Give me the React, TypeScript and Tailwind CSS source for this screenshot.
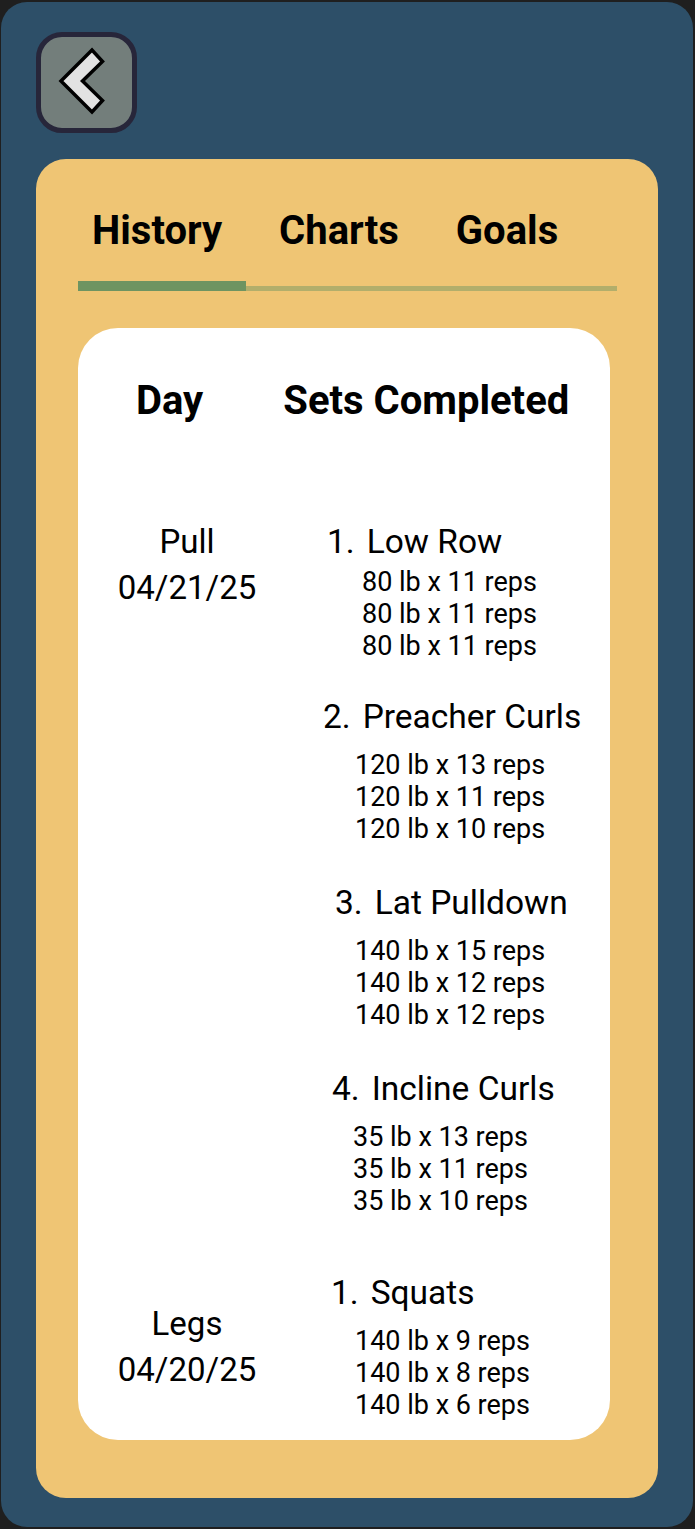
type Exercise = {
  name: string;
  num: number;
  titleClass: string;
  setsClass: string;
  sets: string[];
};

type Workout = {
  day: string;
  date: string;
  rowClass: string;
  exercises: Exercise[];
};

const workouts: Workout[] = [
  {
    day: 'Pull',
    date: '04/21/25',
    rowClass: 'items-start',
    exercises: [
      {
        num: 1,
        name: 'Low Row',
        titleClass: 'pt-[3px] pl-[31px]',
        setsClass: 'mt-[4px] pl-[66px]',
        sets: ['80 lb x 11 reps', '80 lb x 11 reps', '80 lb x 11 reps'],
      },
      {
        num: 2,
        name: 'Preacher Curls',
        titleClass: 'mt-[35px] pl-[27px]',
        setsClass: 'mt-[12px] pl-[59px]',
        sets: ['120 lb x 13 reps', '120 lb x 11 reps', '120 lb x 10 reps'],
      },
      {
        num: 3,
        name: 'Lat Pulldown',
        titleClass: 'mt-[38px] pl-[39px]',
        setsClass: 'mt-[12px] pl-[59px]',
        sets: ['140 lb x 15 reps', '140 lb x 12 reps', '140 lb x 12 reps'],
      },
      {
        num: 4,
        name: 'Incline Curls',
        titleClass: 'mt-[38px] pl-[36px]',
        setsClass: 'mt-[12px] pl-[57px]',
        sets: ['35 lb x 13 reps', '35 lb x 11 reps', '35 lb x 10 reps'],
      },
    ],
  },
  {
    day: 'Legs',
    date: '04/20/25',
    rowClass: 'items-center mt-[56px]',
    exercises: [
      {
        num: 1,
        name: 'Squats',
        titleClass: 'pl-[35px]',
        setsClass: 'mt-[12px] pl-[59px]',
        sets: ['140 lb x 9 reps', '140 lb x 8 reps', '140 lb x 6 reps'],
      },
    ],
  },
];

function BackButton() {
  return (
    <button className="w-[101px] h-[101px] rounded-[26px] border-[5px] border-[#27263a] bg-[#737e7b] flex items-center justify-center">
      <svg width="91" height="91" viewBox="0 0 91 91" className="-translate-x-[2px] -translate-y-[2px]">
        <polygon
          points="22,46 53,15 63.5,26.5 43.5,46 63.5,65.5 53,77"
          fill="#e2e2e2"
          stroke="#000"
          strokeWidth="3.5"
          strokeLinejoin="miter"
        />
      </svg>
    </button>
  );
}

export default function App() {
  const tabs = ['History', 'Charts', 'Goals'];

  return (
    <div className="w-[695px] h-[1529px] bg-[#1f1f1f] pt-[2px] pl-px pr-[2px] pb-[2px] font-[Roboto,sans-serif] text-black">
      <div className="h-full rounded-[26px] bg-[#2d4f68] pt-[30px] pl-[35px] pr-[35px]">
        <BackButton />

        <div className="mt-[26px] h-[1339px] rounded-[30px] bg-[#efc574] pt-[48px]">
          {/* tabs */}
          <div className="flex gap-[57px] pl-[56px]">
            {tabs.map((tab) => (
              <div key={tab} className="text-[40px] leading-[48px] font-bold">
                {tab}
              </div>
            ))}
          </div>
          <div className="mt-[26px] ml-[42px] w-[539px] flex items-end">
            <div className="w-[168px] h-[10px] bg-[#6e9461]" />
            <div className="flex-1 h-[5px] bg-[#b2ae6b]" />
          </div>

          {/* history card */}
          <div className="mt-[37px] ml-[42px] w-[532px] h-[1112px] rounded-[40px] bg-white pt-[49px]">
            <div className="flex items-start text-[40px] leading-[48px] font-bold">
              <div className="pl-[58px]">Day</div>
              <div className="pl-[80px]">Sets Completed</div>
            </div>

            <div className="mt-[94px]">
              {workouts.map((w) => (
                <div key={w.date} className={`flex ${w.rowClass}`}>
                  <div className="w-[218px] shrink-0 flex flex-col items-center text-[33px] leading-[46px]">
                    <div>{w.day}</div>
                    <div>{w.date}</div>
                  </div>
                  <div className="flex flex-col">
                    {w.exercises.map((ex) => (
                      <div key={ex.name} className="flex flex-col">
                        <div className={`flex text-[33.5px] leading-[40px] ${ex.titleClass}`}>
                          <span>{ex.num}.</span>
                          <span className="ml-[12px]">{ex.name}</span>
                        </div>
                        <div className={`flex flex-col text-[27px] leading-[32px] ${ex.setsClass}`}>
                          {ex.sets.map((s, i) => (
                            <div key={i}>{s}</div>
                          ))}
                        </div>
                      </div>
                    ))}
                  </div>
                </div>
              ))}
            </div>
          </div>
        </div>
      </div>
    </div>
  );
}
